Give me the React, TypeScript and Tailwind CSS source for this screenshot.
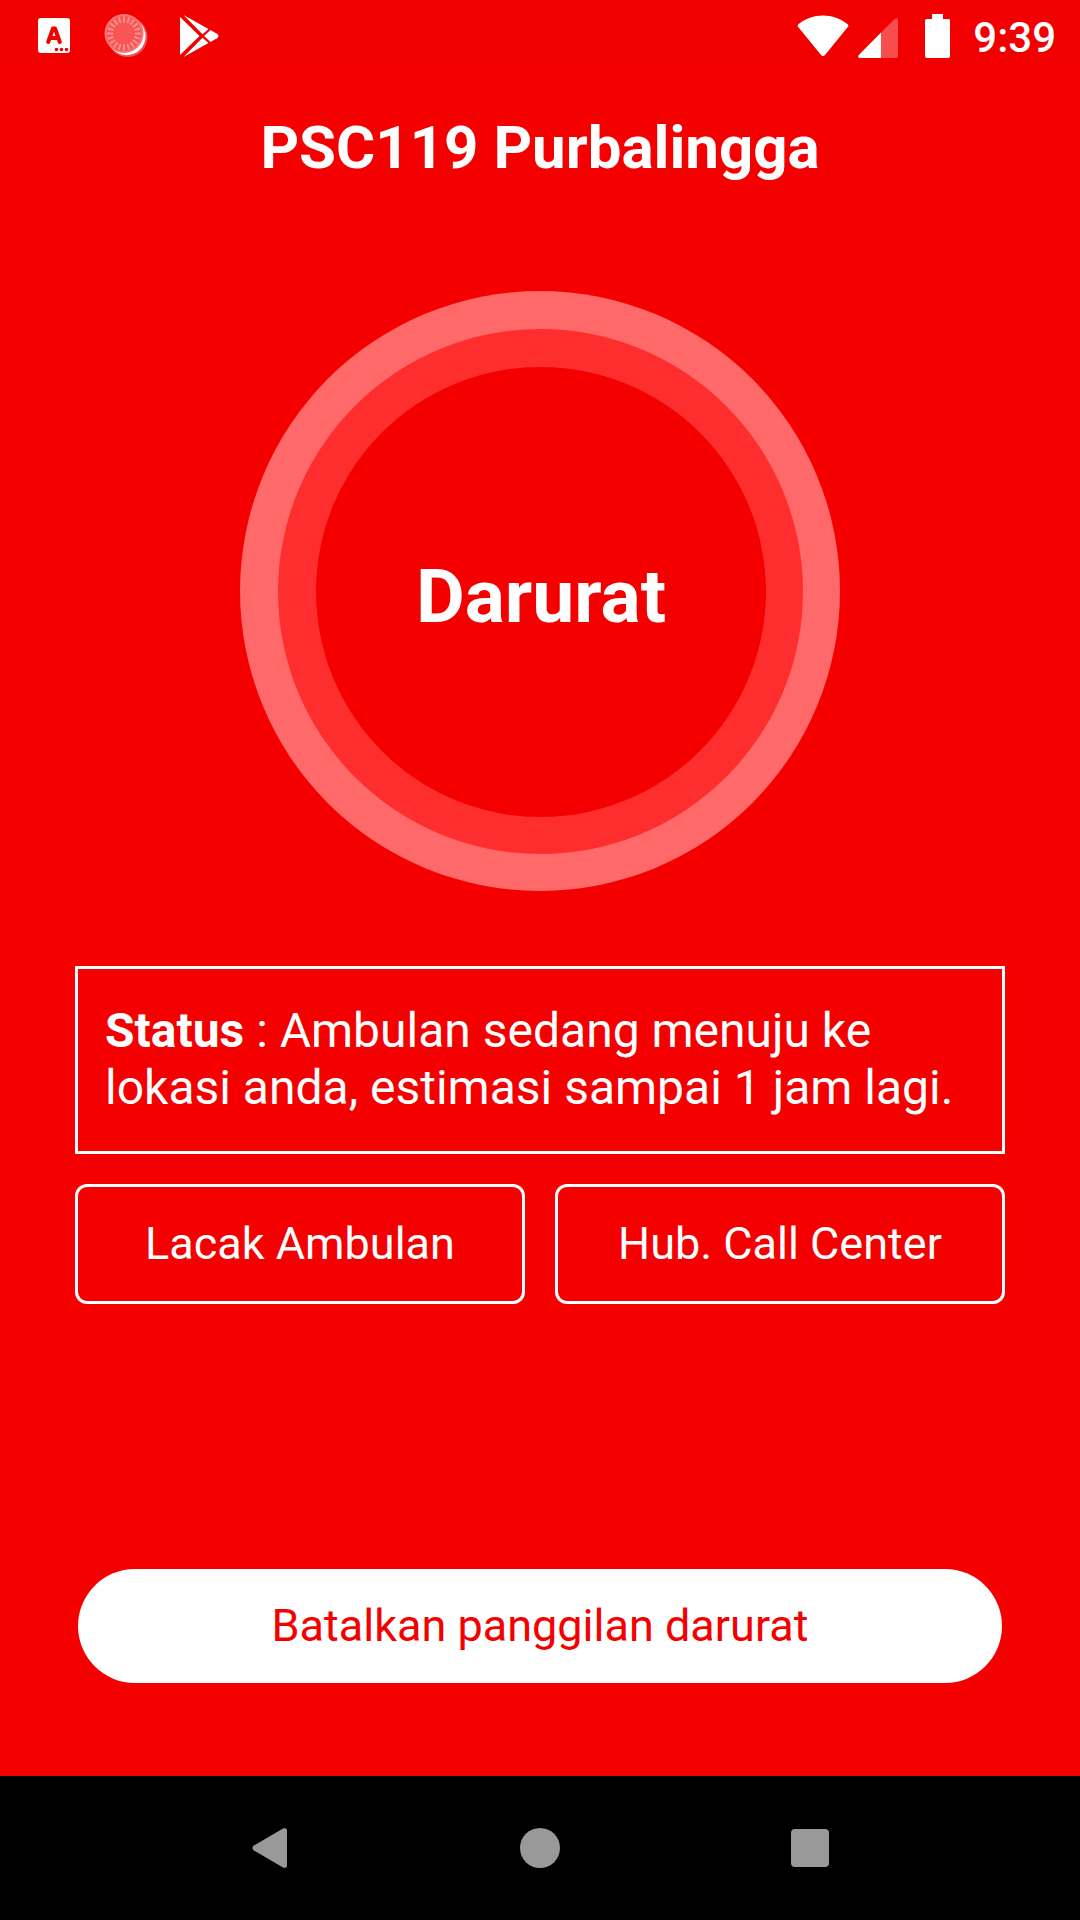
const TICKS = Array.from({ length: 20 }, (_, i) => i * 18);

function KeyboardIcon() {
  return (
    <svg viewBox="0 0 36 40" className="h-10 w-9" aria-hidden="true">
      <rect x="2" y="2" width="32" height="35" rx="3" fill="#fff" />
      <path d="M12.200 26 L17 12.500 H19 L23.800 26 M14 22 H22" fill="none" stroke="#f20000" strokeWidth="4" strokeLinecap="round" strokeLinejoin="round" />
      <circle cx="20.500" cy="33.500" r="1.800" fill="#f20000" />
      <circle cx="25.500" cy="33.500" r="1.800" fill="#f20000" />
      <circle cx="30.500" cy="33.500" r="1.800" fill="#f20000" />
    </svg>
  );
}

function DialIcon() {
  return (
    <svg viewBox="0 0 44 44" className="size-11" aria-hidden="true">
      <circle cx="23.500" cy="23" r="20" fill="#fff" opacity="0.3" />
      <circle cx="22.600" cy="22.200" r="19" fill="#fff" />
      <circle cx="20" cy="19.500" r="19.500" fill="#f97474" />
      <circle cx="20" cy="19.500" r="17.500" fill="#f85555" />
      {TICKS.map((a) => (
        <path key={a} d="M20 2.500 V8.500" stroke="#fa9090" strokeWidth="2" transform={`rotate(${a} 20 19.500)`} />
      ))}
    </svg>
  );
}

function PlayStoreIcon() {
  return (
    <svg viewBox="0 0 40 44" className="h-11 w-10" fill="#fff" aria-hidden="true">
      <path d="M0 3 L19.500 22 L0 41 Z" />
      <path d="M3.500 1 L28.500 15 L22.500 20.300 Z" />
      <path d="M3.500 43 L28.500 29 L22.500 23.700 Z" />
      <path d="M30.500 16 L37 19.800 Q40 22 37 24.200 L30.500 28 L24 22 Z" />
    </svg>
  );
}

function WifiIcon() {
  return (
    <svg viewBox="0 0 52 42" className="h-[42px] w-[52px]" fill="#fff" aria-hidden="true">
      <path d="M1.400 9.300 C15 -2.400 37 -2.400 50.600 9.300 Q52 10.500 50.800 12 L28 40 Q26 42 24 40 L1.200 12 Q0 10.500 1.400 9.300 Z" />
    </svg>
  );
}

function SignalIcon() {
  return (
    <svg viewBox="0 0 40 40" className="size-10" aria-hidden="true">
      <path d="M23 14.500 L37 0.800 Q40 -1 40 2 V38 Q40 40 38 40 H23 Z" fill="#f84d4d" />
      <path d="M23 14.500 V40 H2 Q-1 40 0.800 37 Z" fill="#fff" />
    </svg>
  );
}

function BatteryIcon() {
  return (
    <svg viewBox="0 0 25 44" className="h-11 w-[25px]" fill="#fff" aria-hidden="true">
      <path d="M7 0 H18 V5 H23.500 Q25 5 25 6.500 V42 Q25 44 23 44 H2 Q0 44 0 42 V6.500 Q0 5 1.500 5 H7 Z" />
    </svg>
  );
}

function StatusBar() {
  return (
    <header className="flex h-[72px] items-center justify-between bg-[#f20000] pl-9 pr-6">
      <div className="flex items-center gap-8">
        <KeyboardIcon />
        <DialIcon />
        <PlayStoreIcon />
      </div>
      <div className="flex items-center">
        <WifiIcon />
        <div className="pl-[9px] pt-1">
          <SignalIcon />
        </div>
        <div className="pl-[27px]">
          <BatteryIcon />
        </div>
        <time className="pt-[3px] pl-[23px] text-[42px] leading-[69px] font-medium">9:39</time>
      </div>
    </header>
  );
}

function NavBar() {
  return (
    <nav className="flex h-36 justify-center gap-[150px] bg-black text-[#999]">
      <button type="button" aria-label="Kembali" className="flex w-[120px] items-center justify-center">
        <svg viewBox="0 0 36 40" className="h-10 w-9" fill="currentColor" aria-hidden="true">
          <path d="M1.800 17.500 L31 0.600 Q35 -1 35 3 V37 Q35 41 31 39.400 L1.800 22.500 Q-1 20 1.800 17.500 Z" />
        </svg>
      </button>
      <button type="button" aria-label="Beranda" className="flex w-[120px] items-center justify-center">
        <span className="size-10 rounded-full bg-current" />
      </button>
      <button type="button" aria-label="Terkini" className="flex w-[120px] items-center justify-center">
        <span className="size-[38px] rounded-[4px] bg-current" />
      </button>
    </nav>
  );
}

export default function App() {
  return (
    <div className="flex min-h-screen flex-col bg-[#f40000] font-[Roboto,sans-serif] text-white">
      <StatusBar />
      <main className="flex flex-1 flex-col px-[75px] pt-[41px] pb-[93px]">
        <h1 className="text-center text-[60px] leading-[70px] font-bold">PSC119 Purbalingga</h1>
        <button
          type="button"
          className="mx-auto mt-[108px] size-[600px] rounded-full bg-[#ff6969] pt-[38px] pr-[37px] pb-[37px] pl-[38px]"
        >
          <span className="flex size-full items-center justify-center rounded-full border-t-[38px] border-r-[37px] border-b-[37px] border-l-[38px] border-[#ff2e2e] bg-[#f40000] pt-2 text-[75px] leading-[88px] font-bold">
            Darurat
          </span>
        </button>
        <p className="mt-[75px] border-[3px] border-white px-[27px] pt-[33px] pb-[35px] text-[48px] leading-[57px]">
          <strong className="font-bold">Status</strong> : Ambulan sedang menuju ke lokasi anda, estimasi sampai 1 jam lagi.
        </p>
        <div className="mt-[30px] grid grid-cols-2 gap-[30px]">
          <button type="button" className="h-[120px] rounded-xl border-[3px] border-white text-[45px]">
            Lacak Ambulan
          </button>
          <button type="button" className="h-[120px] rounded-xl border-[3px] border-white text-[45px]">
            Hub. Call Center
          </button>
        </div>
        <button
          type="button"
          className="mx-[3px] mt-auto h-[114px] rounded-full bg-white text-[45px] text-[#f40000]"
        >
          Batalkan panggilan darurat
        </button>
      </main>
      <NavBar />
    </div>
  );
}
